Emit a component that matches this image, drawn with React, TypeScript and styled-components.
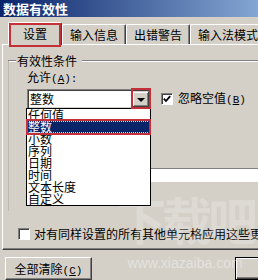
import React from 'react';
import styled, { createGlobalStyle } from 'styled-components';

const face = '#d4d0c8';
const shadow = '#808080';
const darkShadow = '#404040';
const navy = '#0a246a';
const mark = '#c42f38';

const GlobalStyle = createGlobalStyle`
  html, body {
    margin: 0;
    padding: 0;
    background: ${face};
  }
  body {
    font-family: "Noto Sans CJK SC", "Liberation Sans", sans-serif;
    font-size: 12px;
    color: #000;
    overflow: hidden;
  }
`;

const Viewport = styled.div`
  position: relative;
  width: 258px;
  height: 280px;
  overflow: hidden;
  background: ${face};
`;

const Window = styled.div`
  width: 330px;
  display: flex;
  flex-direction: column;
`;

const TitleBar = styled.div`
  height: 17px;
  display: flex;
  align-items: center;
  padding-left: 3px;
  background: linear-gradient(to right, ${navy}, #a6caf0);
`;

const Title = styled.span`
  color: #fff;
  font-weight: bold;
  font-size: 13px;
  line-height: 17px;
`;

const TabStrip = styled.div`
  height: 27px;
  display: flex;
  align-items: flex-end;
  padding-left: 8px;
`;

const Tab = styled.div<{ $active?: boolean }>`
  position: relative;
  z-index: ${(p) => (p.$active ? 2 : 1)};
  box-sizing: border-box;
  height: ${(p) => (p.$active ? 23 : 20)}px;
  width: ${(p) => (p.$active ? '54px' : 'auto')};
  padding: 0 7px;
  margin-bottom: ${(p) => (p.$active ? -1 : 0)}px;
  display: flex;
  align-items: center;
  justify-content: center;
  background: ${face};
  border-top: 1px solid #fff;
  border-left: 1px solid #fff;
  border-right: 1px solid ${darkShadow};
  box-shadow: inset -1px 0 ${shadow};
  border-radius: 2px 2px 0 0;
  line-height: 12px;
  white-space: nowrap;
`;

const MarkBox = styled.span<{ $t: number; $r: number; $b: number; $l: number }>`
  position: absolute;
  top: ${(p) => p.$t}px;
  right: ${(p) => p.$r}px;
  bottom: ${(p) => p.$b}px;
  left: ${(p) => p.$l}px;
  border: 2px solid ${mark};
  pointer-events: none;
  z-index: 5;
`;

const Hotkey = styled.span`
  font-family: "Liberation Mono", monospace;
  font-size: 11px;
`;

const Panel = styled.div`
  box-sizing: border-box;
  height: 206px;
  margin-left: 2px;
  padding: 10px 0 9px 5px;
  display: flex;
  flex-direction: column;
  border-left: 1px solid #fff;
  border-top: 1px solid #fff;
  border-bottom: 1px solid ${darkShadow};
  box-shadow: inset 0 -1px ${shadow};
`;

const GroupBox = styled.div`
  position: relative;
  display: flex;
  flex-direction: column;
  &::before {
    content: '';
    position: absolute;
    left: 0;
    top: 6px;
    height: 150px;
    border-left: 1px solid #bcb8b0;
  }
`;

const LegendRow = styled.div`
  display: flex;
  align-items: center;
  height: 12px;
  line-height: 12px;
`;

const Rule = styled.span<{ $w?: number }>`
  flex: ${(p) => (p.$w ? `0 0 ${p.$w}px` : '1')};
  height: 0;
  border-top: 1px solid ${shadow};
  border-bottom: 1px solid #fff;
  margin: 0 ${(p) => (p.$w ? 1 : 0)}px 0 ${(p) => (p.$w ? 0 : 5)}px;
`;

const FieldLabel = styled.div`
  margin: 4px 0 0 19px;
  line-height: 12px;
`;

const ComboRow = styled.div`
  display: flex;
  align-items: center;
  margin-top: 4px;
  padding-left: 19px;
`;

const Combo = styled.div`
  position: relative;
  box-sizing: border-box;
  width: 124px;
  height: 20px;
  display: flex;
  align-items: center;
  background: #fff;
  border: 1px solid;
  border-color: ${shadow} #fff #fff ${shadow};
  box-shadow: inset 1px 1px ${darkShadow}, inset -1px -1px ${face};
`;

const ComboValue = styled.span`
  flex: 1;
  padding-left: 2px;
  line-height: 12px;
`;

const DropButton = styled.span`
  position: relative;
  box-sizing: border-box;
  width: 17px;
  height: 16px;
  margin-right: 1px;
  display: flex;
  align-items: center;
  justify-content: center;
  background: ${face};
  border: 1px solid;
  border-color: ${face} ${darkShadow} ${darkShadow} ${face};
  box-shadow: inset 1px 1px #fff, inset -1px -1px ${shadow};
`;

const Arrow = styled.span`
  width: 0;
  height: 0;
  margin-top: 2px;
  border-left: 4px solid transparent;
  border-right: 4px solid transparent;
  border-top: 4px solid #000;
`;

const DropList = styled.ul`
  position: absolute;
  top: 100%;
  left: -2px;
  width: 125px;
  box-sizing: border-box;
  margin: 0;
  padding: 0;
  list-style: none;
  background: #fff;
  border: 1px solid #000;
  z-index: 3;
`;

const Option = styled.li<{ $selected?: boolean }>`
  position: relative;
  height: 12px;
  line-height: 12px;
  padding-left: 1px;
  white-space: nowrap;
  background: ${(p) => (p.$selected ? navy : 'transparent')};
  color: ${(p) => (p.$selected ? '#fff' : '#000')};
  outline: ${(p) => (p.$selected ? '1px dotted #e8e4b0' : 'none')};
  outline-offset: -1px;
`;

const CheckLabel = styled.label`
  display: flex;
  align-items: center;
  gap: 5px;
  margin-left: 10px;
  line-height: 12px;
  white-space: nowrap;
`;

const CheckBox = styled.span`
  box-sizing: border-box;
  width: 12px;
  height: 12px;
  display: flex;
  align-items: center;
  justify-content: center;
  background: #fff;
  border: 1px solid;
  border-color: ${shadow} #fff #fff ${shadow};
  box-shadow: inset 1px 1px ${darkShadow};
`;

const HiddenInput = styled.div`
  box-sizing: border-box;
  width: 330px;
  height: 15px;
  margin: 59px 0 0 19px;
  background: #fff;
  border-top: 1px solid ${shadow};
  border-bottom: 1px solid ${face};
`;

const ApplyRow = styled.label`
  display: flex;
  align-items: center;
  gap: 4px;
  margin: auto 0 0 10px;
  line-height: 12px;
  white-space: nowrap;
`;

const Footer = styled.div`
  height: 30px;
  display: flex;
  align-items: flex-start;
  padding: 7px 0 0 5px;
`;

const Button = styled.button<{ $default?: boolean }>`
  box-sizing: border-box;
  height: 23px;
  width: ${(p) => (p.$default ? 75 : 87)}px;
  margin-left: ${(p) => (p.$default ? 143 : 0)}px;
  padding: 3px 0 0;
  font: inherit;
  font-size: 12px;
  line-height: 12px;
  color: #000;
  background: ${face};
  border: 1px solid;
  border-color: ${(p) => (p.$default ? '#000' : `#fff ${darkShadow} ${darkShadow} #fff`)};
  box-shadow: ${(p) =>
    p.$default
      ? `inset 1px 1px #fff, inset -1px -1px ${darkShadow}, inset -2px -2px ${shadow}`
      : `inset -1px -1px ${shadow}`};
  white-space: nowrap;
`;

const Watermark = styled.div`
  position: absolute;
  left: 116px;
  top: 186px;
  display: flex;
  flex-direction: column;
  align-items: center;
  pointer-events: none;
  color: rgba(255, 255, 255, 0.22);
`;

const WatermarkBig = styled.span`
  font-size: 50px;
  font-weight: bold;
  line-height: 64px;
  letter-spacing: -4px;
`;

const WatermarkUrl = styled.span`
  margin-top: 6px;
  font-family: "Liberation Sans", sans-serif;
  font-size: 14px;
  line-height: 14px;
  color: rgba(255, 255, 255, 0.4);
`;

const options = ['任何值', '整数', '小数', '序列', '日期', '时间', '文本长度', '自定义'];
const tabs = ['输入信息', '出错警告', '输入法模式'];

const Check = () => (
  <svg width="8" height="8" viewBox="0 0 8 8">
    <polyline points="0.8,3.6 3,6 7.2,1.2" fill="none" stroke="#000" strokeWidth="1.8" />
  </svg>
);

export default function App() {
  return (
    <Viewport>
      <GlobalStyle />
      <Window>
        <TitleBar>
          <Title>数据有效性</Title>
        </TitleBar>
        <TabStrip>
          <Tab $active>
            设置
            <MarkBox $t={0} $r={0} $b={-2} $l={0} />
          </Tab>
          {tabs.map((t) => (
            <Tab key={t}>{t}</Tab>
          ))}
        </TabStrip>
        <Panel>
          <GroupBox>
            <LegendRow>
              <Rule $w={8} />
              有效性条件
              <Rule />
            </LegendRow>
            <FieldLabel>
              允许<Hotkey>(<u>A</u>):</Hotkey>
            </FieldLabel>
            <ComboRow>
              <Combo>
                <ComboValue>整数</ComboValue>
                <DropButton>
                  <Arrow />
                  <MarkBox $t={-4} $r={-3} $b={-3} $l={-2} />
                </DropButton>
                <DropList>
                  {options.map((o, i) => (
                    <Option key={o} $selected={i === 1}>
                      {o}
                      {i === 1 && <MarkBox $t={-2} $r={-1} $b={-2} $l={-1} />}
                    </Option>
                  ))}
                </DropList>
              </Combo>
              <CheckLabel>
                <CheckBox>
                  <Check />
                </CheckBox>
                <span>
                  忽略空值<Hotkey>(<u>B</u>)</Hotkey>
                </span>
              </CheckLabel>
            </ComboRow>
            <HiddenInput />
          </GroupBox>
          <ApplyRow>
            <CheckBox />
            对有同样设置的所有其他单元格应用这些更改<Hotkey>(<u>P</u>)</Hotkey>
          </ApplyRow>
        </Panel>
        <Footer>
          <Button>
            全部清除<Hotkey>(<u>C</u>)</Hotkey>
          </Button>
          <Button $default>确定</Button>
        </Footer>
      </Window>
      <Watermark>
        <WatermarkBig>下载吧</WatermarkBig>
        <WatermarkUrl>www.xiazaiba.com</WatermarkUrl>
      </Watermark>
    </Viewport>
  );
}
